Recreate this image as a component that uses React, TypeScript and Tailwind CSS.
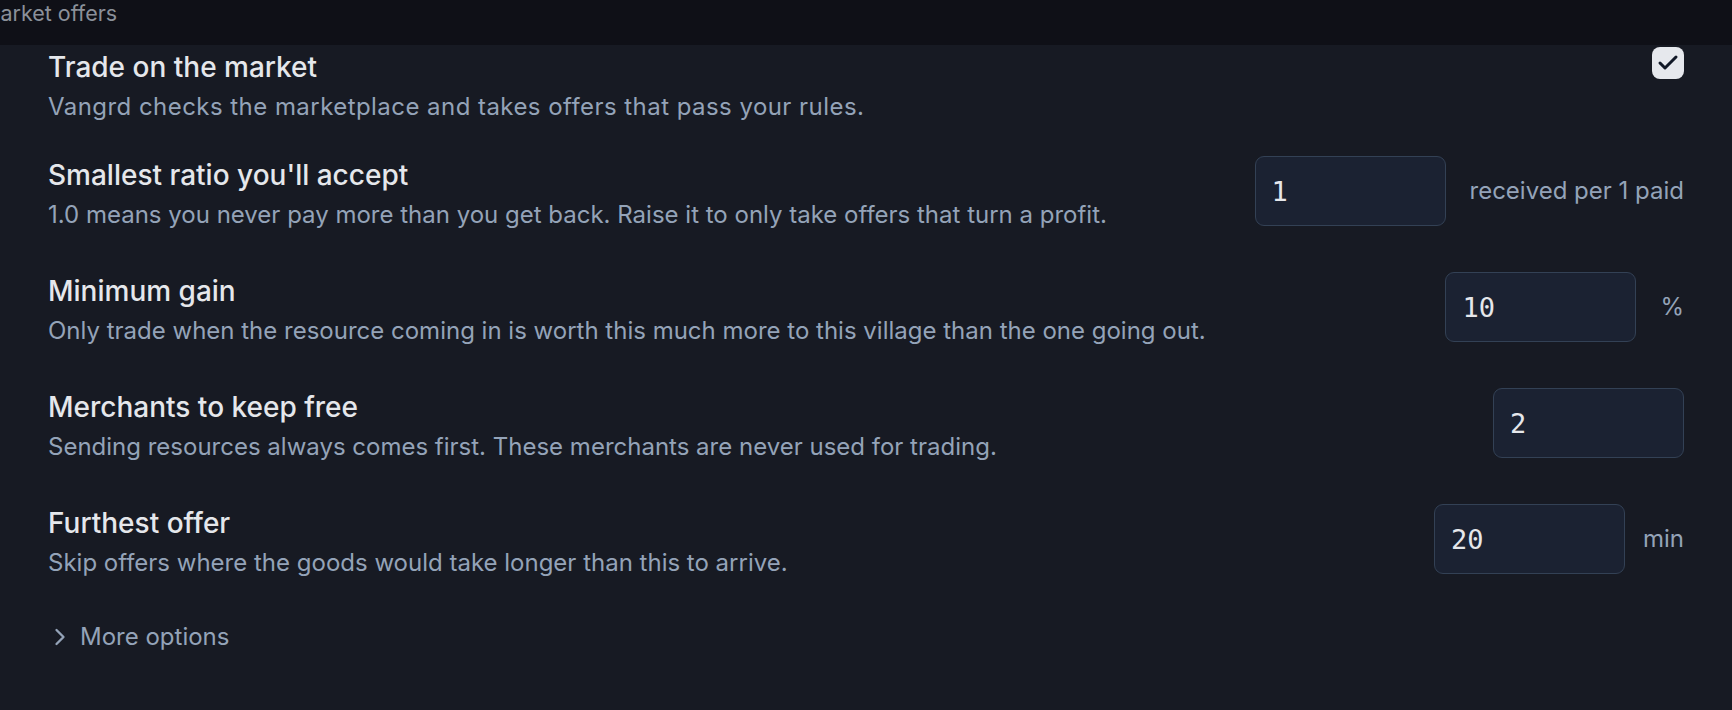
import { Check, ChevronRight } from "lucide-react";

type Setting = {
  title: string;
  hint: string;
  value: string;
  suffix?: string;
  // spacing between the box and its unit label
  gap?: string;
};

const SETTINGS: Setting[] = [
  {
    title: "Smallest ratio you'll accept",
    hint: "1.0 means you never pay more than you get back. Raise it to only take offers that turn a profit.",
    value: "1",
    suffix: "received per 1 paid",
    gap: "gap-6",
  },
  {
    title: "Minimum gain",
    hint: "Only trade when the resource coming in is worth this much more to this village than the one going out.",
    value: "10",
    suffix: "%",
    gap: "gap-6",
  },
  {
    title: "Merchants to keep free",
    hint: "Sending resources always comes first. These merchants are never used for trading.",
    value: "2",
  },
  {
    title: "Furthest offer",
    hint: "Skip offers where the goods would take longer than this to arrive.",
    value: "20",
    suffix: "min",
    gap: "gap-[18px]",
  },
];

function Label({ title, hint, wide }: { title: string; hint: string; wide?: boolean }) {
  return (
    <div className="min-w-0">
      <div className="text-[28px] leading-[42px] font-medium text-[#e5e7eb]">{title}</div>
      <div
        className={`mt-[2px] text-[24px] leading-[34px] text-[#94a3b8] ${
          wide ? "tracking-[0.45px]" : ""
        }`}
      >
        {hint}
      </div>
    </div>
  );
}

function NumberRow({ setting }: { setting: Setting }) {
  return (
    <div className="flex items-center justify-between gap-8">
      <Label title={setting.title} hint={setting.hint} />
      <div className={`mb-[4px] flex shrink-0 items-center ${setting.gap ?? ""}`}>
        <input
          type="text"
          defaultValue={setting.value}
          className="h-[70px] w-[191px] rounded-[9px] border-[1.5px] border-[#334155] bg-[#1b2232] px-4 font-['DejaVu_Sans_Mono',monospace] text-[27px] text-[#e5e7eb] outline-none"
        />
        {setting.suffix ? (
          <span className="text-[24px] text-[#94a3b8]">{setting.suffix}</span>
        ) : null}
      </div>
    </div>
  );
}

export default function App() {
  return (
    <div className="min-h-screen overflow-hidden bg-[#171a23] font-['Inter',sans-serif]">
      <div className="h-[45px] overflow-hidden bg-[#0f1017]">
        <span className="-ml-[19px] block text-[21.5px] leading-[26px] text-[#8b909a]">Market offers</span>
      </div>

      <div className="px-12 pt-px">
        <div className="flex items-start justify-between gap-8">
          <Label
            title="Trade on the market"
            hint="Vangrd checks the marketplace and takes offers that pass your rules."
            wide
          />
          <button
            type="button"
            className="mt-[1px] flex h-8 w-8 shrink-0 items-center justify-center rounded-[8px] bg-[#e6e8ed] text-[#111827]"
          >
            <Check size={24} strokeWidth={3} />
          </button>
        </div>

        <div className="mt-[30px] flex flex-col gap-[38px]">
          {SETTINGS.map((s) => (
            <NumberRow key={s.title} setting={s} />
          ))}
        </div>

        <button
          type="button"
          className="-ml-[2px] mt-[40px] flex items-center gap-[6px] text-[24px] leading-[34px] text-[#94a3b8]"
        >
          <ChevronRight size={28} strokeWidth={2} />
          More options
        </button>
      </div>
    </div>
  );
}
